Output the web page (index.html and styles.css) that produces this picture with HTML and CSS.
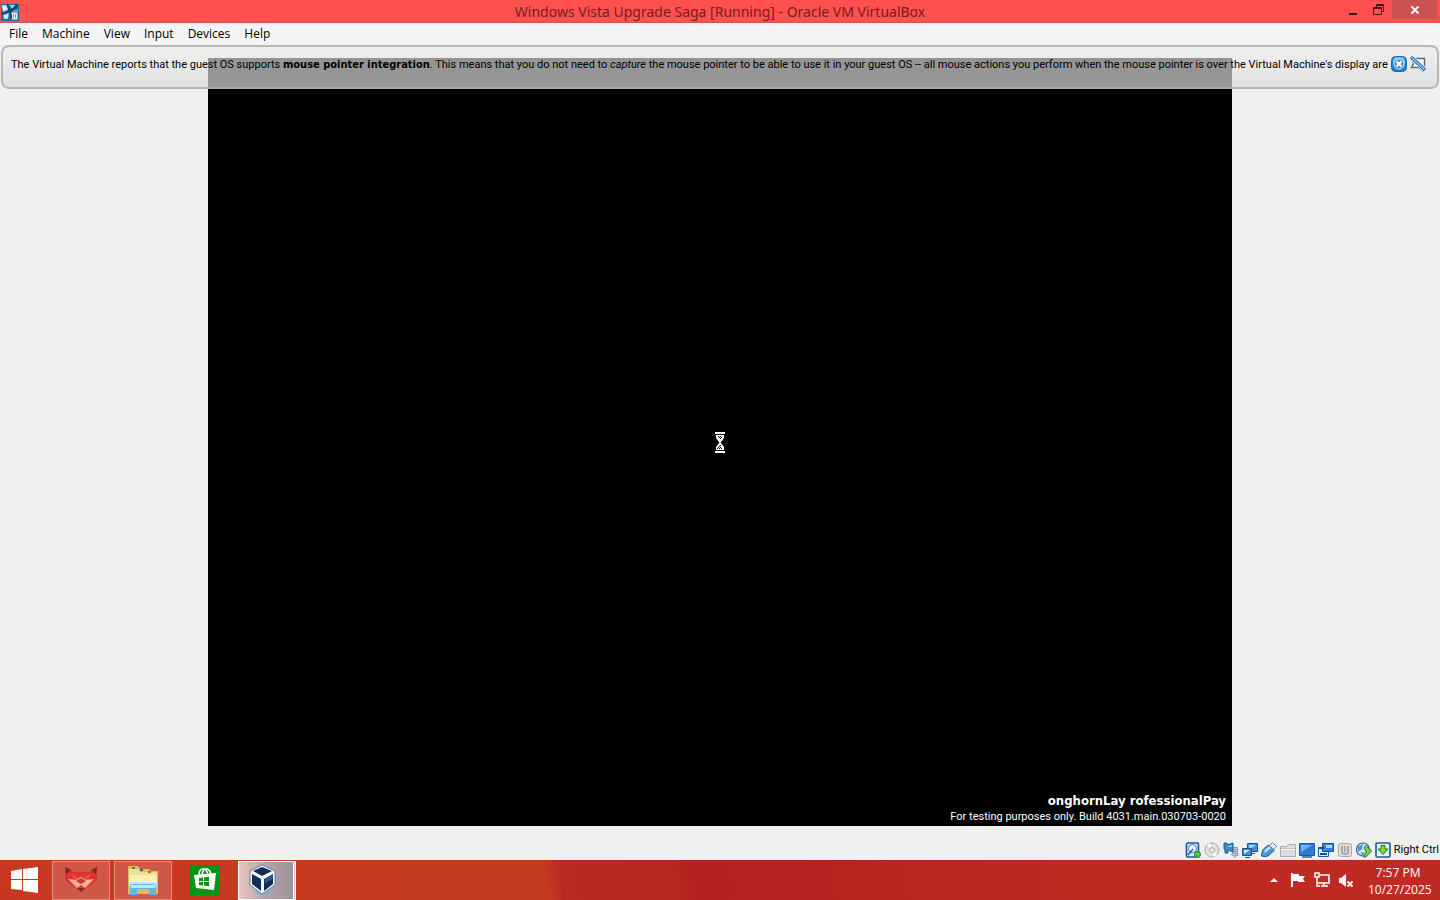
FILE: index.html
```html
<!DOCTYPE html>
<html lang="en">
<head>
<meta charset="utf-8">
<title>Windows Vista Upgrade Saga [Running] - Oracle VM VirtualBox</title>
<link rel="stylesheet" href="styles.css">
</head>
<body>
<header class="titlebar">
  <svg class="app-icon" viewBox="0 0 18 18"><path fill="#2a6a98" d="M0 1h18v17H0z"/><path fill="#9cd7f2" d="M1 2h5l2 5-6 2zM9 2h6l-4 4zM2 12l6-2-1 6H3z"/><path fill="#e2f6fd" d="M1 3h4l2 3-5 1zM3 13l4-2-1 4H4z"/><path fill="#6fa6c9" d="M10 9l7-3v11h-7z"/><path stroke="#0b4273" stroke-width="1.600" d="M1 11L16 4M6 1l5 15M16 1l-6 8"/><path fill="none" stroke="#f0f6fa" d="M11.500 12.500v-2h4v5h-4zM13.500 10v5"/></svg>
  <h1 class="title">Windows Vista Upgrade Saga [Running] - Oracle VM VirtualBox</h1>
  <div class="window-controls">
    <button class="control" aria-label="Minimize"><svg viewBox="0 0 12 12"><path fill="#481414" d="M2 9h8v2H2z"/></svg></button>
    <button class="control" aria-label="Restore"><svg viewBox="0 0 12 12"><path fill="none" stroke="#481414" d="M3.500 3V.5h7v7H9M.5 3.500h8v7h-8zM1 4.500h7M4 1.500h6"/></svg></button>
    <button class="control close" aria-label="Close"><svg viewBox="0 0 12 12"><path stroke="#fff" stroke-width="1.800" d="M2.500 2.500l7 7M9.500 2.500l-7 7"/></svg></button>
  </div>
</header>
<nav class="menubar">
  <button>File</button><button>Machine</button><button>View</button><button>Input</button><button>Devices</button><button>Help</button>
</nav>
<main class="workspace">
  <section class="guest">
    <svg class="hourglass" viewBox="0 0 12 21"><path fill="#fff" d="M1 0h10v2H1zM1 19h10v2H1zM2 3h8v3L7 10v1l3 4v3H2v-3l3-4v-1L2 6z"/><path fill="#000" d="M4 4h1v1H4zM6 4h1v1H6zM5 5h1v1H5zM7 5h1v1H7zM6 6h1v1H6zM6 13h1v1H6zM5 14h1v1H5zM4 15h1v1H4zM6 15h1v1H6zM3 16h1v1H3zM5 16h1v1H5zM7 16h1v1H7z"/></svg>
    <div class="watermark"><strong>onghornLay rofessionalPay</strong><span>For testing purposes only. Build 4031.main.030703-0020</span></div>
  </section>
  <aside class="message">
    <p>The Virtual Machine reports that the guest OS supports <b>mouse pointer integration</b>. This means that you do not need to <i>capture</i> the mouse pointer to be able to use it in your guest OS -- all mouse actions you perform when the mouse pointer is over the Virtual Machine's display are</p>
    <button aria-label="Close message"><svg viewBox="0 0 16 16"><rect x=".5" y=".5" width="15" height="15" rx="4" fill="#2781cb" stroke="#1767ac"/><path fill="#74b9ed" d="M2 5q0-4 4-4h4q4 0 4 4v2H2z"/><circle cx="8" cy="8" r="5" fill="#3b91d8" stroke="#d8efff"/><path stroke="#fff" stroke-width="2" d="M5.500 5.500l5 5M10.500 5.500l-5 5"/></svg></button>
    <button aria-label="Do not show again"><svg viewBox="0 0 16 16"><path fill="#f7fbff" stroke="#50677b" stroke-width="1.400" d="M1.500 2.500h13v9H13v3.500l-4-3.500H1.500l2-4z"/><path stroke="#fff" stroke-width="5" d="M1 1l14 13"/><path stroke="#246cb5" stroke-width="3.500" d="M1 1l14 13"/><path stroke="#8dc4ef" stroke-width="1.500" d="M1.500 1.500l13 12"/></svg></button>
  </aside>
</main>
<footer class="statusbar">
  <svg viewBox="0 0 16 16"><rect x="1.500" y="1" width="12" height="14" rx="1" fill="#d5eaff" stroke="#1659a5" stroke-width="1.600"/><circle cx="7.500" cy="6.500" r="4" fill="#fff" stroke="#3478bd"/><path stroke="#1659a5" stroke-width="1.500" d="M3 13l5-6"/><circle cx="12.500" cy="12.500" r="3" fill="#55c747" stroke="#237d29"/></svg>
  <svg viewBox="0 0 16 16"><circle cx="8" cy="8" r="7" fill="#e3e3e3" stroke="#aaa"/><path fill="#fff" d="M8 8L3 3l3-2zM8 8l5 5-3 2z"/><circle cx="8" cy="8" r="2.500" fill="#eee" stroke="#aaa"/></svg>
  <svg viewBox="0 0 16 16"><path fill="#c5ccd3" stroke="#8d979f" d="M9.500 5.500h5v6h-5zM8 12q0 2 4 2t4-2M12 14v2"/><path stroke="#8d979f" d="M10 7.500h4M10 9.500h4"/><path fill="#3f8ed4" stroke="#1b5491" d="M1 1h3v2l6-2v9L5 8v3H2V7H1z"/><path fill="#8fc6f2" d="M5 4l4-1v2H5z"/></svg>
  <svg viewBox="0 0 16 16"><path fill="#3f8ce0" stroke="#174f91" d="M5.500 1.500h10v8h-10z"/><path fill="#a4d4ff" d="M7 3h7L7 8z"/><path fill="#3f8ce0" stroke="#174f91" d="M.5 6.500h9v7h-9zM3 15.500h5M10 11.500h3"/><path fill="#cae7ff" d="M2 8h6l-6 4z"/></svg>
  <svg viewBox="0 0 16 16"><path fill="#4d98dc" stroke="#235c99" d="M.5 14q0-4 2-7l5-4 6 5-5 5q-4 3-8 1z"/><path fill="#bce0fc" d="M3 9l5-5 2 2-6 5z"/><path fill="#eee" stroke="#6a7f90" d="M8.500 3.500l3-3 4 4-3 3z"/></svg>
  <svg viewBox="0 0 16 16"><path fill="#ddd" stroke="#aaa" d="M.5 4.500h6l2-2h7v12H.5z"/><path stroke="#bbb" d="M1 6.500h14"/><path stroke="#f7f7f7" d="M1 7.500h14"/></svg>
  <svg viewBox="0 0 16 16"><path fill="#2f7bd8" stroke="#1859a9" d="M.5 1.500h15v12H.5z"/><path fill="#6fb2f4" d="M2 3h11L2 10z"/><path stroke="#5786ad" stroke-width="2" d="M3 15h10"/></svg>
  <svg viewBox="0 0 16 16"><path fill="#dcefff" stroke="#1859a9" d="M.5 5.500h10v9H.5z"/><path fill="#3881df" stroke="#144c9b" d="M4.500 1.500h11v8h-11z"/><path fill="#a9d4fc" d="M8 3h6v3H8z"/><path stroke="#144c9b" stroke-width="2" d="M1 6h5M2 12h7"/></svg>
  <svg viewBox="0 0 16 16"><rect x="1.500" y="1.500" width="13" height="13" rx="2" fill="#ddd" stroke="#aaa"/><path fill="none" stroke="#999" stroke-width="1.500" d="M5 4v6q0 2 3 2t3-2V4M8 4v6"/></svg>
  <svg viewBox="0 0 16 16"><circle cx="7" cy="7.500" r="6.500" fill="#cde7fa" stroke="#28669c" stroke-width="1.200"/><path fill="#4a91ca" d="M2 5l5-3-1 5-4 3zM5 10l4 1-3 3z"/><path fill="#76d347" stroke="#28782a" d="M10 3.500l5.500 5.500L10 15H7.500l3-5L8 6z"/></svg>
  <svg viewBox="0 0 16 16"><rect x="1" y="1" width="14" height="14" rx="1" fill="#dff3f5" stroke="#27598b" stroke-width="1.600"/><path fill="#80d62e" stroke="#24781a" d="M6 3.500h4V7h3L8 12.500 3 7h3z"/></svg>
  <span>Right Ctrl</span>
</footer>
<footer class="taskbar">
  <button class="start" aria-label="Start"><svg viewBox="0 0 27 26"><path fill="#fff" d="M0 4l11-2v10H0zM12 2l15-2v12H12zM0 13h11v10L0 22zM12 13h15v13l-15-2z"/></svg></button>
  <button class="task framed" aria-label="Fox"><svg viewBox="0 0 34 32"><path fill="#dc3430" d="M1 3l9 5h14l9-5v13l-7 6-9 5-9-5-7-6z"/><path fill="#7e2527" d="M1 3l6 3-5 4zM33 3l-6 3 5 4zM13 24h8l-4 4z"/><path fill="#ef4a3c" d="M7 9l10 6 10-6-3 8H10z"/><path fill="#ffb09a" d="M4 15l8 1 5-3 5 3 8-1-9 9-4-3-4 3z"/><path fill="#c23a36" d="M12 17l5-3 5 3-5 3z"/></svg></button>
  <button class="task framed" aria-label="File Explorer"><svg viewBox="0 0 34 32"><path fill="#d8bd61" d="M2 2h10l2 3h9l2 2h7v23H2z"/><path fill="#f3e08f" d="M3 5h9l2 3h17v16H3z"/><path fill="#4c7b45" d="M6 3h3v2H6z"/><path fill="#4a6284" d="M14 5h3v2h-3z"/><path fill="#9b694e" d="M22 7h3v2h-3z"/><path fill="#fff0b0" d="M3 11h28v8H3z"/><path fill="#bfe8f2" d="M3 18h28v5H3z"/><path fill="#5cb8e4" d="M4 23q0-3 3-3h20q3 0 3 3v8h-7v-6H11v6H4z"/><path fill="#c0e8f8" d="M5 21h24v3H5z"/></svg></button>
  <button class="task" aria-label="Store"><svg viewBox="0 0 34 32"><path fill="#089414" d="M2 1h30v30H2z"/><path fill="none" stroke="#fff" stroke-width="1.500" d="M11 11q0-6 4-6t5 6M14 11q1-7 5-6 3 1 4 5"/><path fill="#fff" d="M6 11l22-2-2 17-18-2z"/><path fill="#089414" d="M11 14l4-.5v3.500h-4zM16 13.400l5-.6V17h-5zM11 18h4v3.500l-4-.5zM16 18h5v4.200l-5-.6z"/></svg></button>
  <button class="task active" aria-label="VirtualBox"><svg viewBox="0 0 34 32"><ellipse cx="18" cy="28" rx="9" ry="3" fill="#8fa9cc"/><path fill="#f5f8fb" stroke="#6b7b94" d="M4 7l12-6 13 6v14l-13 9-12-9z"/><path fill="#102c57" d="M7 7l9-4 10 4-10 5zM6 10l9 5v12l-9-7zM18 15l9-5v10l-9 7z"/><path fill="#315785" d="M19 15l8-4v3l-8 6z"/></svg></button>
  <div class="tray">
    <svg viewBox="0 0 16 16"><path fill="#fff" d="M4 10l4-4 4 4z"/></svg>
    <svg viewBox="0 0 16 16"><path fill="#fff" d="M1 1h2v14H1zM3 2h6v2h6l-2 3 2 3H8V9H3z"/></svg>
    <svg viewBox="0 0 16 16"><path fill="none" stroke="#fff" stroke-width="1.500" d="M6 3h9v8H4M10 11v3M7 14h7M1 1h4v4H1zM3 5v9h3"/></svg>
    <svg viewBox="0 0 16 16"><path fill="#fff" d="M1 6h2l5-4v13l-5-4H1z"/><path stroke="#fff" stroke-width="1.800" d="M9.500 9.500l5 5M14.500 9.500l-5 5"/></svg>
    <time>7:57 PM<br>10/27/2025</time>
  </div>
</footer>
</body>
</html>
```
FILE: styles.css
```css
* { box-sizing: border-box; }
body { margin: 0; height: 100vh; display: flex; flex-direction: column; overflow: hidden; background: #f0f0f0; color: #000; font-family: "Open Sans", "Noto Sans", sans-serif; font-size: 12px; }
button { margin: 0; padding: 0; border: 0; background: none; color: inherit; font: inherit; }
svg { display: block; flex: none; }
.titlebar { flex: none; height: 23px; display: grid; grid-template-columns: 1fr auto 1fr; align-items: center; background: #ff5050; border-bottom: 1px solid #d45252; }
.app-icon { width: 18px; height: 18px; margin-left: 1px; }
.title { margin: 0; color: #761d1d; font-family: "Noto Sans", "Open Sans", sans-serif; font-size: 14px; line-height: 22px; padding-top: 1px; font-weight: 400; }
.window-controls { display: flex; justify-content: flex-end; align-self: start; }
.control { width: 26px; height: 19px; display: grid; place-items: center; }
.control svg { width: 12px; height: 12px; }
.close { width: 45px; margin-right: 3px; background: #cc5251; }
.menubar { flex: none; height: 22px; display: flex; align-items: center; gap: 14px; padding-left: 9px; background: #f5f5f5; line-height: 20px; }
.workspace { position: relative; flex: 1; min-height: 0; display: grid; place-items: center; }
.guest { position: relative; width: 1024px; max-width: 100%; aspect-ratio: 4 / 3; display: grid; place-items: center; background: #000; }
.hourglass { width: 12px; height: 21px; }
.watermark { position: absolute; right: 6px; bottom: 1px; display: flex; flex-direction: column; align-items: flex-end; color: #fff; font-family: Roboto, sans-serif; font-size: 11px; line-height: 16px; }
.watermark strong { font-family: "DejaVu Sans Condensed", "DejaVu Sans", sans-serif; font-size: 13px; }
.message { position: absolute; top: 0; left: 1px; right: 1px; height: 44px; display: flex; align-items: flex-start; gap: 3px; padding: 9px 11px 0 8px; border: 2px solid #b9b9b9; border-color: rgba(175, 175, 175, .85); border-radius: 8px; background: linear-gradient(rgba(238, 238, 238, .62), rgba(219, 219, 219, .69)); }
.message p { flex: 1; min-width: 0; margin: 0; overflow: hidden; white-space: nowrap; font-family: Roboto, sans-serif; font-size: 11px; line-height: 18px; }
.message b { font-family: "DejaVu Sans Condensed", "DejaVu Sans", sans-serif; }
.message button, .message svg { width: 16px; height: 16px; }
.statusbar { flex: none; height: 21px; display: flex; align-items: center; justify-content: flex-end; gap: 3px; padding-right: 1px; font-family: Roboto, sans-serif; font-size: 11px; }
.statusbar svg { width: 16px; height: 16px; }
.taskbar { flex: none; height: 40px; display: flex; align-items: center; gap: 4px; background: linear-gradient(80deg, #c83820 0%, #c63b20 24%, #c43b20 38%, #bc2a24 39%, #b82822 47%, #b52120 48%, #b82420 60%, #bf2b23 75%, #bf2b22 100%); }
.start { width: 48px; display: grid; place-items: center; }
.start svg { width: 27px; height: 26px; }
.task { width: 58px; height: 39px; display: grid; place-items: center; }
.task svg { width: 34px; height: 32px; }
.framed { border: 1px solid #e18d78; background: #cf5847; }
.active { justify-content: start; padding-left: 7px; border: 1px solid #fff; border-right: 3px double #fff; background: linear-gradient(90deg, #e9c4c1, #b3a3a8 50%, #a29098); }
.tray { margin-left: auto; display: flex; align-items: center; gap: 8px; padding-right: 12px; color: #fff; }
.tray svg { width: 16px; height: 16px; }
.tray time { width: 60px; margin-left: 6px; padding-top: 2px; text-align: center; line-height: 17px; white-space: nowrap; }
```
